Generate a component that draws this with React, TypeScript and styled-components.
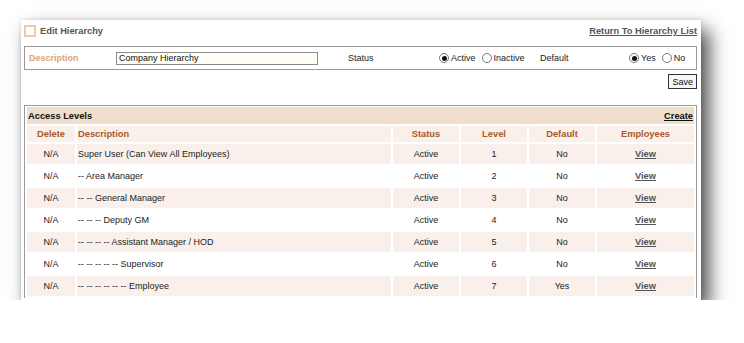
import styled, { createGlobalStyle } from "styled-components";

const GlobalStyle = createGlobalStyle`
    html, body {
        margin: 0;
        background: #fff;
    }
    body {
        font-family: "Liberation Sans", Arial, sans-serif;
        font-size: 9px;
        color: #222;
    }
`;

const Panel = styled.div`
    margin: 20px 0 0 21px;
    width: 680px;
    height: 280px;
    box-sizing: border-box;
    padding: 0 4px 0 3px;
    background: #fff;
    overflow: hidden;
    box-shadow: 0 0 4px rgba(0, 0, 0, 0.15), 8px 10px 18px rgba(0, 0, 0, 0.7);
`;

const TitleBar = styled.div`
    height: 26px;
    box-sizing: border-box;
    padding-top: 5px;
    display: flex;
    align-items: flex-start;
    justify-content: space-between;
`;

const Title = styled.h1`
    margin: 0;
    display: flex;
    align-items: center;
    gap: 4px;
    font-size: 9.3px;
    line-height: 12px;
    font-weight: bold;
    color: #555;
`;

const TitleIcon = styled.span`
    width: 12px;
    height: 12px;
    box-sizing: border-box;
    border: 2px solid #eccaa6;
`;

const BoldLink = styled.a`
    font-size: 9.3px;
    line-height: 12px;
    font-weight: bold;
    color: ${({ color }) => color || "#555"};
    text-decoration: underline;
    cursor: pointer;
`;

const FormBox = styled.div`
    height: 24px;
    box-sizing: border-box;
    border: 1px solid #999;
    padding-left: 4px;
    display: grid;
    grid-template-columns: 87px 232px 91px 101px 89px auto;
    align-items: center;
`;

const FieldLabel = styled.span<{ $accent?: boolean }>`
    font-weight: ${({ $accent }) => ($accent ? "bold" : "normal")};
    color: ${({ $accent }) => ($accent ? "#d9a678" : "#222")};
`;

const TextInput = styled.input`
    width: 202px;
    height: 13px;
    box-sizing: border-box;
    margin: 0;
    padding: 0 2px;
    border: 1px solid #8a8a8a;
    background: #fffdf4;
    font-family: "Liberation Sans", Arial, sans-serif;
    font-size: 9px;
    color: #111;
    outline: none;
`;

const RadioGroup = styled.div`
    display: flex;
    align-items: center;
    gap: 6px;
`;

const RadioOption = styled.label`
    display: flex;
    align-items: center;
    gap: 2px;
`;

const RadioDot = styled.span<{ $checked?: boolean }>`
    width: 10px;
    height: 10px;
    box-sizing: border-box;
    border-radius: 50%;
    border: 1px solid #7a7a7a;
    background: #fff;
    display: flex;
    align-items: center;
    justify-content: center;

    &::after {
        content: "";
        width: 5px;
        height: 5px;
        border-radius: 50%;
        background: ${({ $checked }) => ($checked ? "#111" : "transparent")};
    }
`;

const ActionRow = styled.div`
    display: flex;
    justify-content: flex-end;
    padding-top: 4px;
`;

const SaveButton = styled.button`
    height: 15px;
    box-sizing: border-box;
    margin: 0;
    padding: 0 3px;
    border: 1px solid #333;
    background: #f8f6f2;
    font-family: "Liberation Sans", Arial, sans-serif;
    font-size: 9px;
    line-height: 12px;
    color: #111;
`;

const TableBox = styled.div`
    margin-top: 16px;
    border: 1px solid #999;
    border-bottom: none;
`;

const Grid = styled.table`
    width: 100%;
    table-layout: fixed;
    border-spacing: 2px;
    margin-top: -1px;
    font-size: 9px;
`;

const Band = styled.td`
    height: 17px;
    padding: 0 1px;
    background: #efdecb;
`;

const BandInner = styled.div`
    display: flex;
    justify-content: space-between;
    align-items: center;
    font-size: 9.3px;
    font-weight: bold;
    color: #111;
`;

const HeadCell = styled.th<{ $left?: boolean }>`
    height: 16px;
    padding: 0 1px;
    background: #f9f0ea;
    color: #a85a2c;
    font-size: 9.3px;
    font-weight: bold;
    text-align: ${({ $left }) => ($left ? "left" : "center")};
`;

const Row = styled.tr<{ $tinted?: boolean }>`
    background: ${({ $tinted }) => ($tinted ? "#f9f0eb" : "#fff")};
`;

const Cell = styled.td<{ $left?: boolean }>`
    height: 20px;
    padding: 0 1px;
    text-align: ${({ $left }) => ($left ? "left" : "center")};
    white-space: nowrap;
`;

const radios = (a: string, b: string) => (
    <RadioGroup>
        <RadioOption><RadioDot $checked />{a}</RadioOption>
        <RadioOption><RadioDot />{b}</RadioOption>
    </RadioGroup>
);

const levels = [
    "Super User (Can View All Employees)",
    "-- Area Manager",
    "-- -- General Manager",
    "-- -- -- Deputy GM",
    "-- -- -- -- Assistant Manager / HOD",
    "-- -- -- -- -- Supervisor",
    "-- -- -- -- -- -- Employee",
];

const App = () => {
    return (
        <>
            <GlobalStyle />
            <Panel>
                <TitleBar>
                    <Title><TitleIcon />Edit Hierarchy</Title>
                    <BoldLink>Return To Hierarchy List</BoldLink>
                </TitleBar>

                <FormBox>
                    <FieldLabel $accent>Description</FieldLabel>
                    <span><TextInput defaultValue="Company Hierarchy" /></span>
                    <FieldLabel>Status</FieldLabel>
                    {radios("Active", "Inactive")}
                    <FieldLabel>Default</FieldLabel>
                    {radios("Yes", "No")}
                </FormBox>

                <ActionRow>
                    <SaveButton>Save</SaveButton>
                </ActionRow>

                <TableBox>
                    <Grid>
                        <colgroup>
                            <col style={{ width: 48 }} />
                            <col style={{ width: 314 }} />
                            <col style={{ width: 66 }} />
                            <col style={{ width: 66 }} />
                            <col style={{ width: 66 }} />
                            <col />
                        </colgroup>
                        <thead>
                            <tr>
                                <Band colSpan={6}>
                                    <BandInner>
                                        <span>Access Levels</span>
                                        <BoldLink color="#111">Create</BoldLink>
                                    </BandInner>
                                </Band>
                            </tr>
                            <tr>
                                <HeadCell>Delete</HeadCell>
                                <HeadCell $left>Description</HeadCell>
                                <HeadCell>Status</HeadCell>
                                <HeadCell>Level</HeadCell>
                                <HeadCell>Default</HeadCell>
                                <HeadCell>Employees</HeadCell>
                            </tr>
                        </thead>
                        <tbody>
                            {levels.map((name, i) => (
                                <Row key={name} $tinted={i % 2 === 0}>
                                    <Cell>N/A</Cell>
                                    <Cell $left>{name}</Cell>
                                    <Cell>Active</Cell>
                                    <Cell>{i + 1}</Cell>
                                    <Cell>{i === levels.length - 1 ? "Yes" : "No"}</Cell>
                                    <Cell><BoldLink>View</BoldLink></Cell>
                                </Row>
                            ))}
                        </tbody>
                    </Grid>
                </TableBox>
            </Panel>
        </>
    );
};

export default App;
